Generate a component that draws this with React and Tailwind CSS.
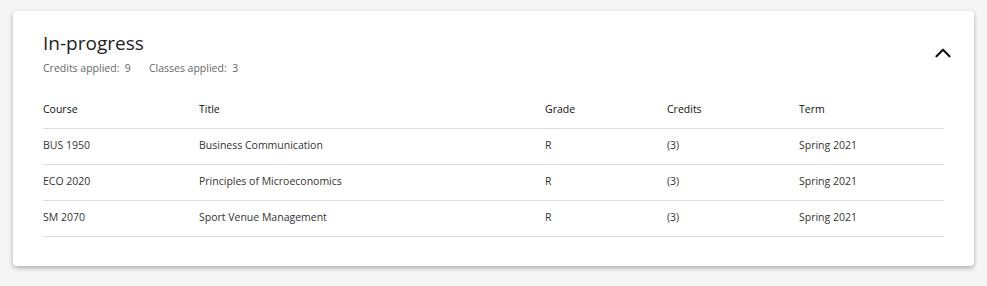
import { ChevronUp } from 'lucide-react';

const rows = [
  { course: 'BUS 1950', title: 'Business Communication', grade: 'R', credits: '(3)', term: 'Spring 2021' },
  { course: 'ECO 2020', title: 'Principles of Microeconomics', grade: 'R', credits: '(3)', term: 'Spring 2021' },
  { course: 'SM 2070', title: 'Sport Venue Management', grade: 'R', credits: '(3)', term: 'Spring 2021' },
];

export default function App() {
  return (
    <div className="min-h-[286px] bg-[#f5f5f5] px-[13px] pt-[11px] pb-[20px] font-['Open_Sans',sans-serif]">
      <div className="bg-white rounded-[4px] shadow-[0_2px_5px_rgba(0,0,0,0.3)] pl-[30px] pr-[30px] pt-[20px] pb-[29px]">
        {/* Header */}
        <div className="flex items-start justify-between">
          <div>
            <h2 className="text-[19px] leading-[24px] text-[#222] font-normal">In-progress</h2>
            <div className="flex gap-[18px] mt-[6px] text-[10.5px] leading-[14px] text-[#666]">
              <span>Credits applied:&nbsp;&nbsp;9</span>
              <span>Classes applied:&nbsp;&nbsp;3</span>
            </div>
          </div>
          <button className="mt-[9px] -mr-[12px] text-[#111]">
            <ChevronUp className="w-[26px] h-[26px]" strokeWidth={2} />
          </button>
        </div>

        {/* Table */}
        <table className="w-full mt-[17px] text-[10.5px] text-left border-collapse">
          <thead>
            <tr className="border-b border-[#dcdcdc]">
              <th className="w-[156px] h-[36px] font-medium text-[#111]">Course</th>
              <th className="w-[346px] font-medium text-[#111]">Title</th>
              <th className="w-[122px] font-medium text-[#111]">Grade</th>
              <th className="w-[132px] font-medium text-[#111]">Credits</th>
              <th className="font-medium text-[#111]">Term</th>
            </tr>
          </thead>
          <tbody className="text-[#333]">
            {rows.map((r) => (
              <tr key={r.course} className="border-b border-[#dcdcdc]">
                <td className="h-[36px]">{r.course}</td>
                <td>{r.title}</td>
                <td>{r.grade}</td>
                <td>{r.credits}</td>
                <td>{r.term}</td>
              </tr>
            ))}
          </tbody>
        </table>
      </div>
    </div>
  );
}
